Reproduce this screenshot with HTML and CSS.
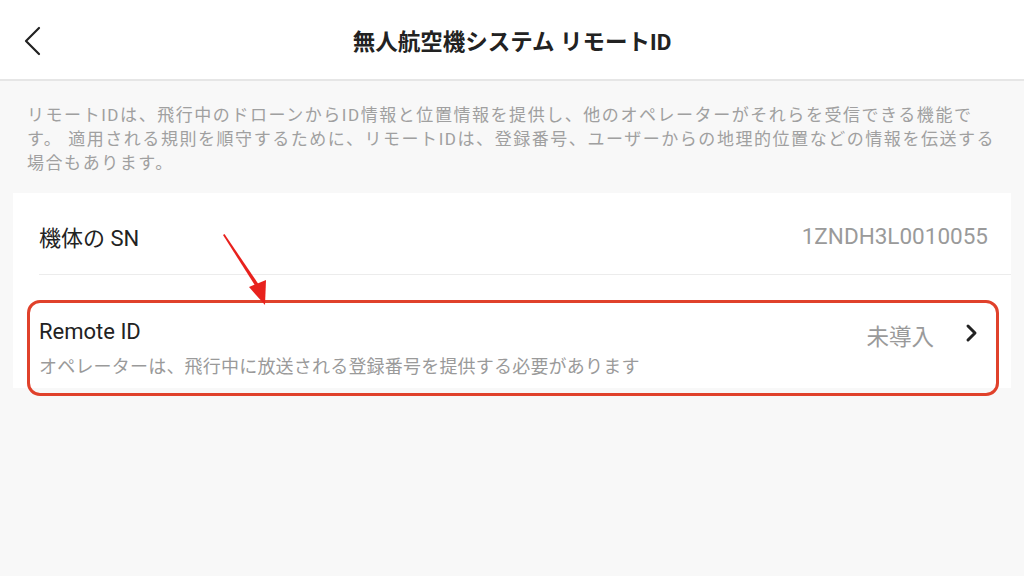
FILE: index.html
```html
<!DOCTYPE html>
<html lang="ja">
<head>
    <meta charset="UTF-8">
    <meta name="viewport" content="width=device-width, initial-scale=1.0">
    <title>無人航空機システム リモートID</title>
    <link rel="stylesheet" href="styles.css">
</head>
<body>
    <header class="topbar">
        <button class="topbar__back" aria-label="戻る">
            <svg width="20" height="30" viewBox="0 0 20 30" fill="none" stroke="#222" stroke-width="2.2" stroke-linecap="round" stroke-linejoin="round">
                <path d="M16 2 L3 15 L16 28"/>
            </svg>
        </button>
        <h1 class="topbar__title">無人航空機システム リモートID</h1>
    </header>

    <main class="content">
        <p class="intro">リモートIDは、飛行中のドローンからID情報と位置情報を提供し、他のオペレーターがそれらを受信できる機能です。 適用される規則を順守するために、リモートIDは、登録番号、ユーザーからの地理的位置などの情報を伝送する場合もあります。</p>

        <section class="card">
            <div class="row">
                <span class="row__label">機体の SN</span>
                <span class="row__value">1ZNDH3L0010055</span>
            </div>
            <div class="row row--link">
                <div class="row__text">
                    <span class="row__label">Remote ID</span>
                    <span class="row__hint">オペレーターは、飛行中に放送される登録番号を提供する必要があります</span>
                </div>
                <span class="row__value">未導入</span>
                <svg class="row__chevron" width="14" height="20" viewBox="0 0 14 20" fill="none" stroke="#222" stroke-width="3" stroke-linecap="round" stroke-linejoin="round">
                    <path d="M4 3 L11 10 L4 17"/>
                </svg>
            </div>
        </section>

        <!-- annotation overlay -->
        <div class="mark-box"></div>
        <svg class="mark-arrow" width="60" height="75" viewBox="0 0 60 75">
            <path d="M2 2 L3.5 1 L38 52 L35 54 Z" fill="#e8211d"/>
            <path d="M28 54 L45 47 L44 72 Z" fill="#e8211d"/>
        </svg>
    </main>
</body>
</html>
```

FILE: styles.css
```css
/* Reset */
* {
    margin: 0;
    padding: 0;
    box-sizing: border-box;
}
body {
    font-family: Roboto, "Noto Sans CJK JP", sans-serif;
    background-color: #f8f8f8;
    color: #222;
    height: 576px;
    overflow: hidden;
}
.topbar {
    position: relative;
    height: 81px;
    background-color: #fff;
    border-bottom: 2px solid #e6e6e6;
    display: flex;
    align-items: center;
    justify-content: center;
}
.topbar__back {
    position: absolute;
    left: 23px;
    top: 26px;
    border: none;
    background: none;
    cursor: pointer;
}
.topbar__title {
    font-size: 22.5px;
    font-weight: 700;
}
.content {
    position: relative;
    padding: 22px 13px 0;
}
.intro {
    padding: 0 14px;
    font-size: 17px;
    line-height: 24px;
    letter-spacing: 1.55px;
    color: #a0a0a0;
}
.card {
    margin-top: 18px;
    background-color: #fff;
}
.row {
    display: flex;
    align-items: center;
    margin-left: 26px;
    padding-top: 4px;
    padding-right: 23px;
    height: 82px;
    border-bottom: 1px solid #ececec;
}
.row--link {
    align-items: flex-start;
    height: 113px;
    border-bottom: none;
    padding-top: 44px;
    padding-right: 33px;
}
.row__text {
    display: flex;
    flex-direction: column;
    gap: 8px;
    flex: 1;
}
.row__label {
    flex: 1;
    font-size: 22px;
}
.row__hint {
    font-size: 18px;
    color: #9a9a9a;
    letter-spacing: 0.2px;
}
.row__value {
    font-size: 22.5px;
    color: #9a9a9a;
}
.row__chevron {
    margin-top: 4px;
    margin-left: 30px;
}
.mark-box {
    position: absolute;
    left: 27px;
    top: 219px;
    width: 972px;
    height: 96px;
    border: 3px solid #e0412b;
    border-radius: 13px;
}
.mark-arrow {
    position: absolute;
    left: 221px;
    top: 152px;
}
```
